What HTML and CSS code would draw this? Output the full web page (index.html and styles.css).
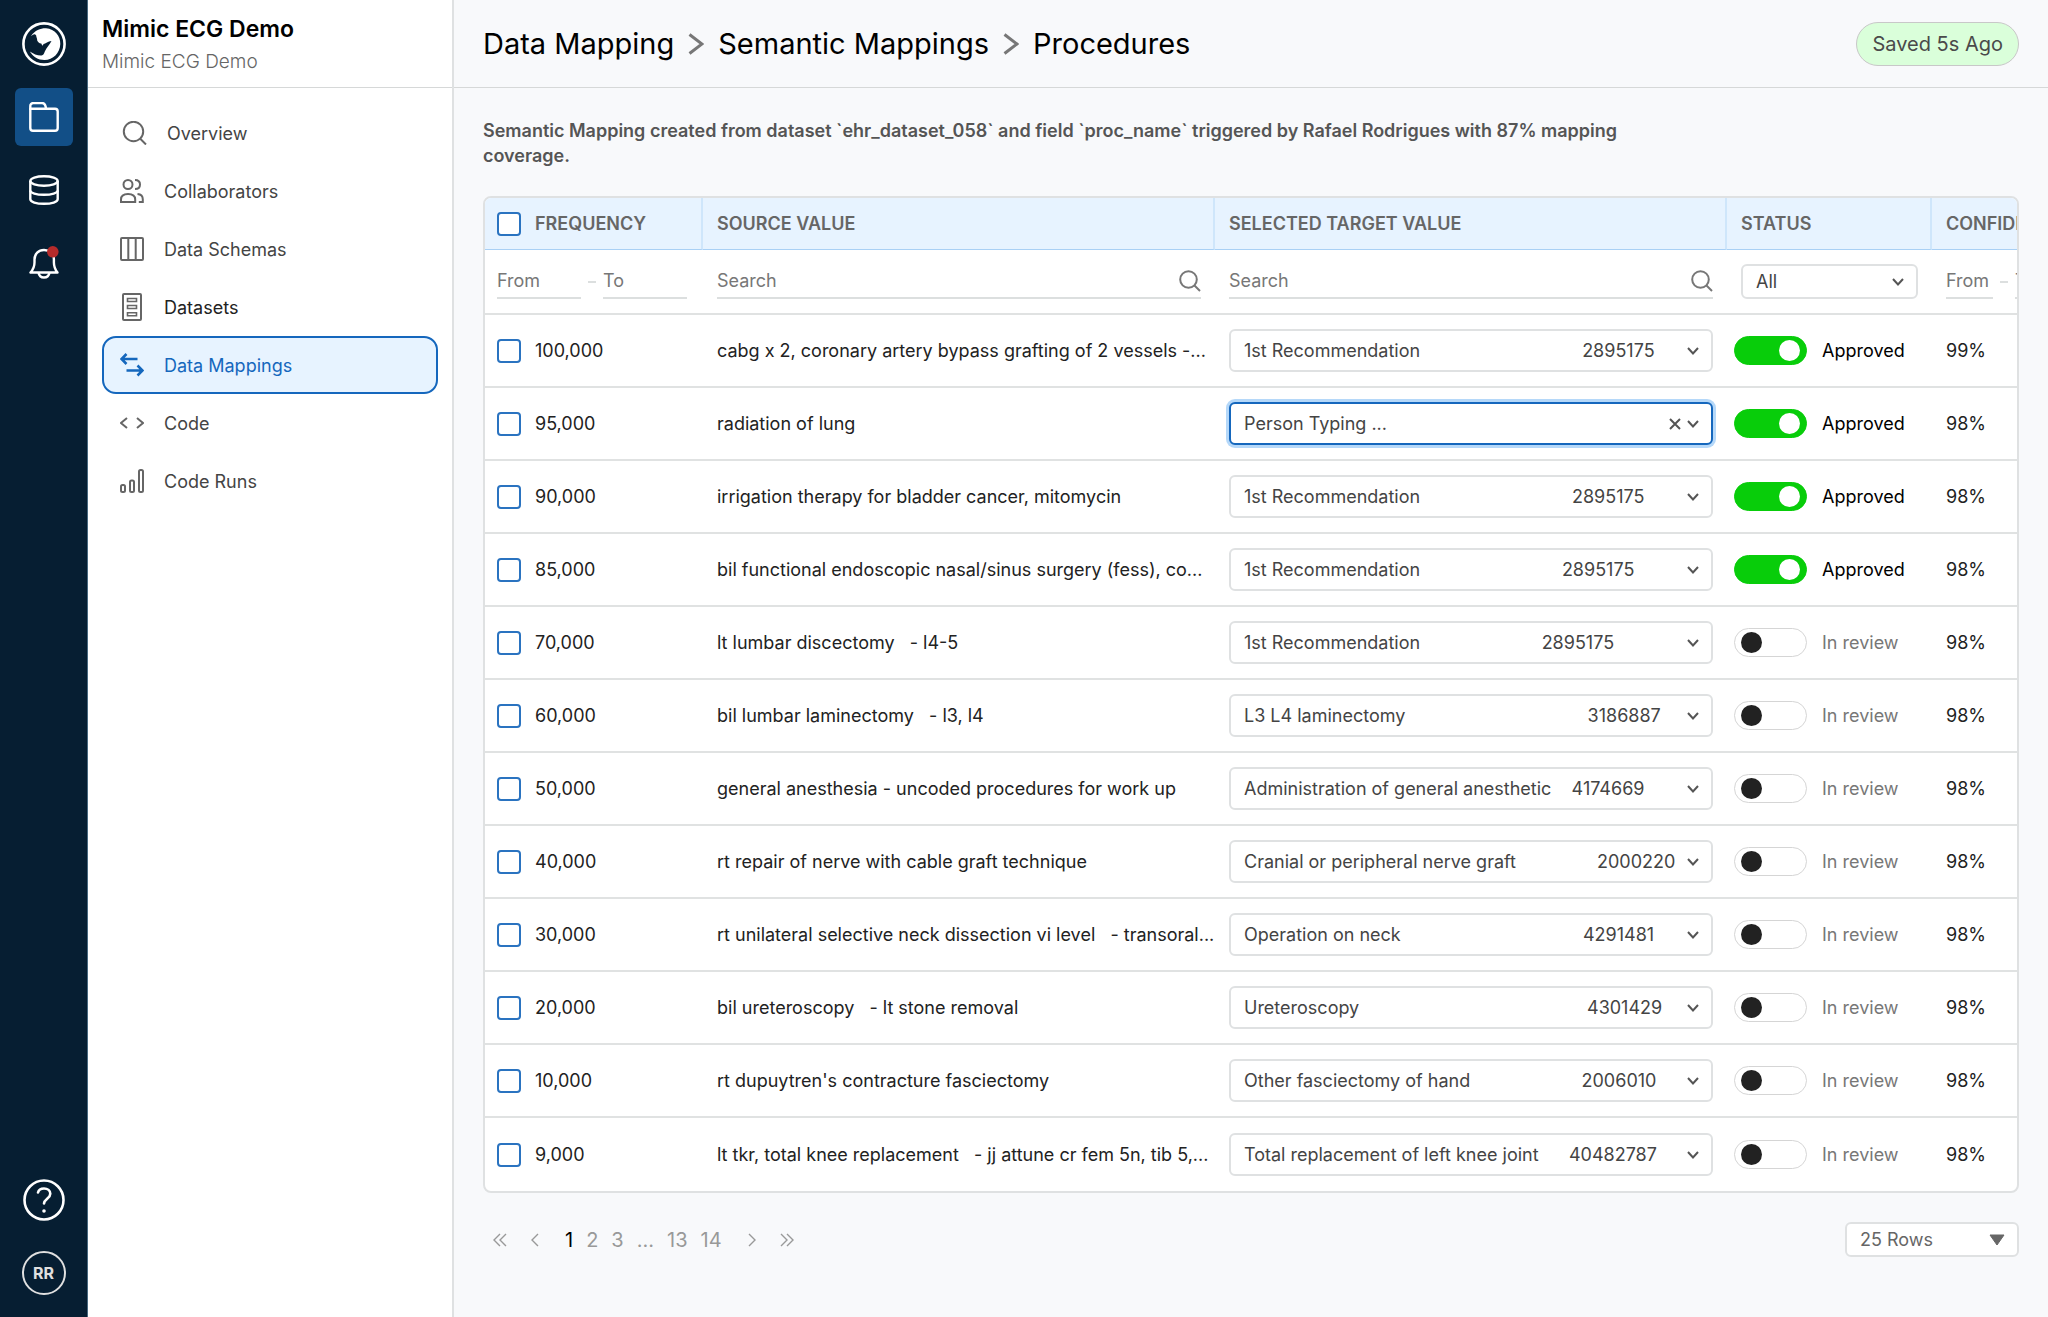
FILE: index.html
```
<!DOCTYPE html>
<html lang="en">
<head>
    <meta charset="utf-8">
    <meta name="viewport" content="width=device-width, initial-scale=1">
    <link rel="stylesheet" href="styles.css">
    <title>Mimic ECG Demo - Procedures</title>
</head>
<body>
    <div class="app">
        <nav class="rail" aria-label="Main">
            <a class="logo" href="#" aria-label="Home">
                <svg viewBox="0 0 44 44" width="44" height="44">
                    <circle cx="22" cy="22" r="20.6" fill="none" stroke="#fff" stroke-width="2.6"/>
                    <path fill="#fff" d="M9 14C13 8 19 6 24 6.200C33 7 38.500 14 38.300 22C38 31 31 38 22.500 38C16 38 11 34.500 7.800 29.500C11.500 32 15.500 33.700 19.500 33.500C21.500 33.300 22 31.500 22.800 29.500C24.500 25.500 27.500 23 29.500 19C26 19.500 23.500 21.500 21.500 22L20.800 23.800C20 23.400 19.500 22.600 19.300 21.600C17.500 21.800 15.800 20 15.200 18.500C15.200 16.500 14.200 15 14.200 13.500L13 12.200C11.500 12 10.500 13 9 14Z"/>
                </svg>
            </a>
            <a class="rail-btn active" href="#" aria-label="Projects">
                <svg viewBox="0 0 30 30" width="30" height="30" fill="none" stroke="#fff" stroke-width="2.400" stroke-linejoin="round">
                    <path d="M1.300 8V4a3 3 0 0 1 3-3h8.500c2.600 0 4 2.500 4.200 5.800"/>
                    <path d="M1.300 6.800H26a2.700 2.700 0 0 1 2.700 2.700V26a2.700 2.700 0 0 1-2.700 2.700H4A2.700 2.700 0 0 1 1.300 26Z"/>
                </svg>
            </a>
            <a class="rail-btn" href="#" aria-label="Data">
                <svg viewBox="0 0 30 30" width="30" height="30" fill="none" stroke="#fff" stroke-width="2.400">
                    <ellipse cx="15" cy="6" rx="13.700" ry="4.700"/>
                    <path d="M1.300 6v18.300c0 2.600 6 4.500 13.700 4.500s13.700-1.900 13.700-4.500V6"/>
                    <path d="M1.300 15.500c0 2.400 6 4.300 13.700 4.300s13.700-1.900 13.700-4.300"/>
                </svg>
            </a>
            <a class="rail-btn" href="#" aria-label="Notifications">
                <svg viewBox="0 0 30 34" width="30" height="34" fill="none" stroke="#fff" stroke-width="2.400" stroke-linejoin="round">
                    <path d="M1.500 26.500h27c-2.500-3-3.600-6-3.600-10v-3C24.900 8 20.500 4 15 4S5.500 8 5.500 13.500v3c0 4-1.300 7-4 10Z"/>
                    <path d="M9.500 26.500c.5 3.200 2.700 5 5.500 5s5-1.800 5.500-5"/>
                    <circle cx="23.800" cy="5.800" r="5.800" fill="#b52b2b" stroke="none"/>
                </svg>
            </a>
            <a class="rail-btn rail-bottom" href="#" aria-label="Help">
                <svg viewBox="0 0 42 42" width="42" height="42" fill="none" stroke="#fff" stroke-linecap="round">
                    <circle cx="21" cy="21" r="19.500" stroke-width="2.600"/>
                    <path stroke-width="2.600" d="M15 13.500c.6-2.400 3-4 6-4 3.700 0 6.300 2.200 6.300 5.300 0 4.700-5.800 5.200-6.300 9.700"/>
                    <circle cx="21" cy="32" r="1.800" fill="#fff" stroke="none"/>
                </svg>
            </a>
            <a class="rail-btn" href="#" aria-label="Account"><span class="avatar">RR</span></a>
        </nav>

        <aside class="sidebar">
            <div class="project">
                <div class="project-name">Mimic ECG Demo</div>
                <div class="project-sub">Mimic ECG Demo</div>
            </div>
            <nav class="menu" aria-label="Project">
                <a href="#">
                    <svg viewBox="0 0 27 24" width="27" height="24"><circle cx="13.500" cy="10.500" r="9.700"/><path d="M20 17.500l6 6"/></svg>
                    Overview
                </a>
                <a href="#">
                    <svg viewBox="0 0 24 24" width="24" height="24"><circle cx="8" cy="5.500" r="4.500"/><path d="M15 1c3.200 0 5 2 5 4.500S18.200 10 15 10"/><path d="M1 23v-2.500c0-3.500 2.500-5.500 7-5.500s7.200 2 7.200 5.500V23Z"/><path d="M17.500 15c3.500.3 5.300 2.200 5.300 5.200V23h-4"/></svg>
                    Collaborators
                </a>
                <a href="#">
                    <svg viewBox="0 0 24 24" width="24" height="24"><rect x="1" y="1" width="22" height="22" rx="1"/><path d="M8.300 1v22M15.700 1v22"/></svg>
                    Data Schemas
                </a>
                <a class="dark" href="#">
                    <svg viewBox="0 0 24 28" width="24" height="28"><rect x="3" y="1" width="18" height="26" rx="1"/><path d="M7.500 5.500h9v3h-9zM7.500 12.500h9v3h-9zM7.500 19.800h9v3h-9z" stroke-width="1.600"/></svg>
                    Datasets
                </a>
                <a class="active" href="#">
                    <svg viewBox="0 0 24 24" width="24" height="24"><path stroke-width="2.600" d="M6.500 1L1.500 6l5 5M1.500 6H17.500M17.500 12.500l5 5-5 5M22.500 17.500H6.500"/></svg>
                    Data Mappings
                </a>
                <a href="#">
                    <svg viewBox="0 0 24 24" width="24" height="24"><path d="M7 7l-6 5 6 5M17 7l6 5-6 5"/></svg>
                    Code
                </a>
                <a href="#">
                    <svg viewBox="0 0 24 24" width="24" height="24"><rect x="1" y="16" width="4" height="7" rx="1.500"/><rect x="10" y="11.500" width="4" height="11.500" rx="1.500"/><rect x="19" y="1" width="4" height="22" rx="1.500"/></svg>
                    Code Runs
                </a>
            </nav>
        </aside>

        <main>
            <header class="topbar">
                <div class="crumbs">
                    <a href="#">Data Mapping</a>
                    <svg viewBox="0 0 16 22" width="16" height="22"><path d="M1.500 1.500L14 11 1.500 20.500"/></svg>
                    <a href="#">Semantic Mappings</a>
                    <svg viewBox="0 0 16 22" width="16" height="22"><path d="M1.500 1.500L14 11 1.500 20.500"/></svg>
                    <a href="#">Procedures</a>
                </div>
                <div class="saved">Saved 5s Ago</div>
            </header>

            <section class="content">
                <p class="summary">Semantic Mapping created from dataset `ehr_dataset_058` and field `proc_name` triggered by Rafael Rodrigues with 87% mapping coverage.</p>

                <div class="table-wrap">
                    <table id="mappings">
                        <colgroup>
                            <col class="col-freq">
                            <col class="col-value">
                            <col class="col-value">
                            <col class="col-status">
                            <col class="col-status">
                        </colgroup>
                        <thead>
                            <tr class="titles">
                                <th><label class="check"><input type="checkbox">FREQUENCY</label></th>
                                <th>SOURCE VALUE</th>
                                <th>SELECTED TARGET VALUE</th>
                                <th>STATUS</th>
                                <th>CONFIDENCE</th>
                            </tr>
                            <tr class="filters">
                                <td>
                                    <div class="range">
                                        <input type="text" placeholder="From" aria-label="Frequency from">
                                        <span></span>
                                        <input type="text" placeholder="To" aria-label="Frequency to">
                                    </div>
                                </td>
                                <td>
                                    <div class="search">
                                        <input type="text" placeholder="Search" aria-label="Search source value">
                                        <svg viewBox="0 0 22 22" width="22" height="22"><circle cx="9.500" cy="9.500" r="8.300"/><path d="M15.500 15.500l5.500 5.500"/></svg>
                                    </div>
                                </td>
                                <td>
                                    <div class="search">
                                        <input type="text" placeholder="Search" aria-label="Search target value">
                                        <svg viewBox="0 0 22 22" width="22" height="22"><circle cx="9.500" cy="9.500" r="8.300"/><path d="M15.500 15.500l5.500 5.500"/></svg>
                                    </div>
                                </td>
                                <td>
                                    <div class="picker small">
                                        <select aria-label="Status"><option>All</option><option>Approved</option><option>In review</option></select>
                                        <svg class="chevron" viewBox="0 0 12 8" width="12" height="8"><path d="M1 1l5 5.500L11 1"/></svg>
                                    </div>
                                </td>
                                <td>
                                    <div class="range narrow">
                                        <input type="text" placeholder="From" aria-label="Confidence from">
                                        <span></span>
                                        <input type="text" placeholder="To" aria-label="Confidence to">
                                    </div>
                                </td>
                            </tr>
                        </thead>
                        <tbody>
                            <!-- Mapping rows will be added here -->
                        </tbody>
                    </table>
                </div>

                <footer class="table-footer">
                    <div class="pages">
                        <button class="arrow" aria-label="First page"><svg viewBox="0 0 14 14" width="14" height="14"><path d="M7 1L1 7l6 6M13 1L7 7l6 6"/></svg></button>
                        <button class="arrow" aria-label="Previous page"><svg viewBox="0 0 14 14" width="14" height="14"><path d="M10 1L4 7l6 6"/></svg></button>
                        <div class="numbers">
                            <button class="current">1</button>
                            <button>2</button>
                            <button>3</button>
                            <span>...</span>
                            <button>13</button>
                            <button>14</button>
                        </div>
                        <button class="arrow" aria-label="Next page"><svg viewBox="0 0 14 14" width="14" height="14"><path d="M4 1l6 6-6 6"/></svg></button>
                        <button class="arrow" aria-label="Last page"><svg viewBox="0 0 14 14" width="14" height="14"><path d="M1 1l6 6-6 6M7 1l6 6-6 6"/></svg></button>
                    </div>
                    <div class="picker rows">
                        <select aria-label="Rows per page"><option>25 Rows</option><option>50 Rows</option></select>
                        <svg class="triangle" viewBox="0 0 16 12" width="16" height="12"><path d="M1 1h14L8 11Z"/></svg>
                    </div>
                </footer>
            </section>
        </main>
    </div>

    <script>
        // frequency, source value, target value, concept id, spaces before the id, approved, confidence
        const mappings = [
            ["100,000", "cabg x 2, coronary artery bypass grafting of 2 vessels -...", "1st Recommendation", "2895175", 32, true, "99%"],
            ["95,000", "radiation of lung", "Person Typing ...", "", 0, true, "98%"],
            ["90,000", "irrigation therapy for bladder cancer, mitomycin", "1st Recommendation", "2895175", 30, true, "98%"],
            ["85,000", "bil functional endoscopic nasal/sinus surgery (fess), co...", "1st Recommendation", "2895175", 28, true, "98%"],
            ["70,000", "lt lumbar discectomy   - l4-5", "1st Recommendation", "2895175", 24, false, "98%"],
            ["60,000", "bil lumbar laminectomy   - l3, l4", "L3 L4 laminectomy", "3186887", 36, false, "98%"],
            ["50,000", "general anesthesia - uncoded procedures for work up", "Administration of general anesthetic", "4174669", 4, false, "98%"],
            ["40,000", "rt repair of nerve with cable graft technique", "Cranial or peripheral nerve graft", "2000220", 16, false, "98%"],
            ["30,000", "rt unilateral selective neck dissection vi level   - transoral...", "Operation on neck", "4291481", 36, false, "98%"],
            ["20,000", "bil ureteroscopy   - lt stone removal", "Ureteroscopy", "4301429", 45, false, "98%"],
            ["10,000", "rt dupuytren's contracture fasciectomy", "Other fasciectomy of hand", "2006010", 22, false, "98%"],
            ["9,000", "lt tkr, total knee replacement   - jj attune cr fem 5n, tib 5,...", "Total replacement of left knee joint", "40482787", 6, false, "98%"]
        ];

        const chevron = `<svg class="chevron" viewBox="0 0 12 8" width="12" height="8"><path d="M1 1l5 5.500L11 1"/></svg>`;

        function targetField(target, code, gap) {
            if (!code) {
                return `
                    <div class="picker typing">
                        <input type="text" value="${target}" aria-label="Target value">
                        <button class="clear" aria-label="Clear"><svg viewBox="0 0 12 12" width="12" height="12"><path d="M1 1l10 10M11 1L1 11"/></svg></button>
                        ${chevron}
                    </div>`;
            }
            return `
                <div class="picker">
                    <select aria-label="Target value"><option>${target}${"\u00a0".repeat(gap)}${code}</option></select>
                    ${chevron}
                </div>`;
        }

        const tableBody = document.querySelector("#mappings tbody");
        mappings.forEach(([frequency, source, target, code, gap, approved, confidence]) => {
            const row = document.createElement("tr");
            row.innerHTML = `
                <td><label class="check"><input type="checkbox">${frequency}</label></td>
                <td class="source">${source}</td>
                <td>${targetField(target, code, gap)}</td>
                <td class="status"><label class="toggle"><input type="checkbox" ${approved ? "checked" : ""}><span>${approved ? "Approved" : "In review"}</span></label></td>
                <td>${confidence}</td>
            `;
            tableBody.appendChild(row);
        });
    </script>
</body>
</html>
```

FILE: styles.css
```
* {box-sizing: border-box;}
body {margin: 0; background-color: #f8f9fb; color: #222; font-family: Inter, "Liberation Sans", sans-serif; font-size: 18px;}
a {color: inherit; text-decoration: none;}
svg {display: block; flex: none;}
input, select, button {font: inherit; color: inherit; margin: 0;}
button {border: 0; padding: 0; background: none; cursor: pointer;}
.app {display: flex; min-height: 100vh;}

/* dark icon rail */
.rail {display: flex; flex-direction: column; align-items: center; gap: 15px; flex: none; width: 88px; padding: 22px 0 15px; background-color: #061e32; border-right: 1px solid #47687f;}
.logo {margin-bottom: 7px;}
.rail-btn {display: flex; align-items: center; justify-content: center; width: 58px; height: 58px; border-radius: 6px;}
.rail-btn.active {background-color: #124f87;}
.rail-bottom {margin-top: auto;}
.avatar {display: flex; align-items: center; justify-content: center; width: 44px; height: 44px; border: 2px solid #e0e0e0; border-radius: 50%; color: #e0e0e0; font-size: 16px; font-weight: 700;}

/* project menu */
.sidebar {flex: none; width: 366px; background-color: #fff; border-right: 2px solid #dfe1e2;}
.project {height: 88px; padding: 12px 14px 0; border-bottom: 1px solid #d6d8d8;}
.project-name {color: #000; font-size: 23px; font-weight: 600; line-height: 34px;}
.project-sub {color: #666; font-size: 19px; font-weight: 300; line-height: 32px;}
.menu {display: flex; flex-direction: column; padding: 16px 14px;}
.menu a {display: flex; align-items: center; gap: 20px; height: 58px; padding: 0 17px; border: 1px solid transparent; border-radius: 14px; color: #444;}
.menu svg {fill: none; stroke: #666; stroke-width: 2;}
.menu a.dark {color: #222;}
.menu a.active {border: 2px solid #1567bd; padding: 0 16px; background-color: #e7f3ff; color: #1567bd;}
.menu a.active svg {stroke: #1567bd;}

main {flex: 1; min-width: 0;}
.topbar {display: flex; align-items: center; justify-content: space-between; height: 88px; padding: 0 29px; border-bottom: 1px solid #d6d8d8;}
.crumbs {display: flex; align-items: center; gap: 14px; color: #000; font-size: 29px;}
.crumbs svg {fill: none; stroke: #777; stroke-width: 3;}
.saved {height: 44px; padding: 0 15px; border: 1px solid #c8c8c8; border-radius: 22px; background-color: #daffda; color: #4a4a4a; font-size: 20px; line-height: 42px;}

.content {padding: 30px 29px;}
.summary {max-width: 1160px; margin: 0 0 28px; color: #555; font-weight: 600; line-height: 25px;}

/* mapping table */
.table-wrap {overflow: hidden; border: 2px solid #dfe1e2; border-radius: 8px; background-color: #fff;}
table {table-layout: fixed; width: 1652px; border-collapse: separate; border-spacing: 0;}
.col-freq {width: 218px;}
.col-value {width: 512px;}
.col-status {width: 205px;}
th, td {padding: 0 14px; text-align: left; white-space: nowrap;}
th:first-child, td:first-child {padding-left: 12px;}
th {height: 52px; border-right: 2px solid #cfe6fb; border-bottom: 1px solid #a9d0f5; background-color: #e7f3ff; color: #666; font-weight: 600;}
td {height: 73px; border-bottom: 2px solid #e0e2e2;}
td.source {white-space: pre;}
tbody tr:last-child td {border-bottom: 0;}
.filters td {height: 65px;}
.check {display: flex; align-items: center; gap: 14px;}
.check input {appearance: none; flex: none; width: 24px; height: 24px; border: 2px solid #2a73c0; border-radius: 4px; background-color: #fff;}
.range {display: flex; align-items: center; gap: 7px;}
.range input {width: 84px; height: 34px; padding: 0; border: 0; border-bottom: 2px solid #dcdfdf; background: none;}
.range span {width: 8px; height: 2px; background-color: #dcdfdf;}
.range.narrow input {width: 47px;}
.search {display: flex; align-items: center; height: 34px; border-bottom: 2px solid #dcdfdf;}
.search input {flex: 1; border: 0; padding: 0; background: none;}
.search svg {fill: none; stroke: #777; stroke-width: 2;}
::placeholder {color: #777; opacity: 1;}

.picker {position: relative;}
.picker select, .picker input {appearance: none; display: block; width: 100%; height: 43px; padding: 0 13px; border: 2px solid #dfe1e2; border-radius: 6px; background-color: #fff; color: #444;}
.picker.typing input {border-color: #1567bd; box-shadow: 0 0 0 3px #b5d8f9;}
.picker.small select, .picker.rows select {height: 35px;}
.chevron, .clear, .triangle {position: absolute; top: 50%; right: 14px; transform: translateY(-50%);}
.chevron, .clear svg {fill: none; stroke: #555; stroke-width: 2;}
.clear {right: 32px;}
.triangle {fill: #666; stroke: #666; stroke-linejoin: round;}

td.status {padding-left: 7px;}
.toggle {display: flex; align-items: center; gap: 15px; color: #777;}
.toggle input {appearance: none; display: flex; align-items: center; width: 73px; height: 29px; padding: 0 6px; border: 1px solid #d5d5d5; border-radius: 15px; background-color: #fff;}
.toggle input::before {content: ""; width: 21px; height: 21px; border-radius: 50%; background-color: #222;}
.toggle input:checked {justify-content: flex-end; border-color: #08cd0a; background-color: #08cd0a;}
.toggle input:checked::before {background-color: #fff;}
.toggle input:checked + span {color: #000;}

.table-footer {display: flex; align-items: center; justify-content: space-between; padding-top: 29px;}
.pages {display: flex; align-items: center; gap: 21px; padding-left: 10px; color: #999; font-size: 20px;}
.numbers {display: flex; gap: 13px; padding: 0 2px;}
.numbers .current {color: #000;}
.arrow svg {fill: none; stroke: #999; stroke-width: 1.4;}
.rows {width: 174px;}
.rows select {color: #666;}
```
